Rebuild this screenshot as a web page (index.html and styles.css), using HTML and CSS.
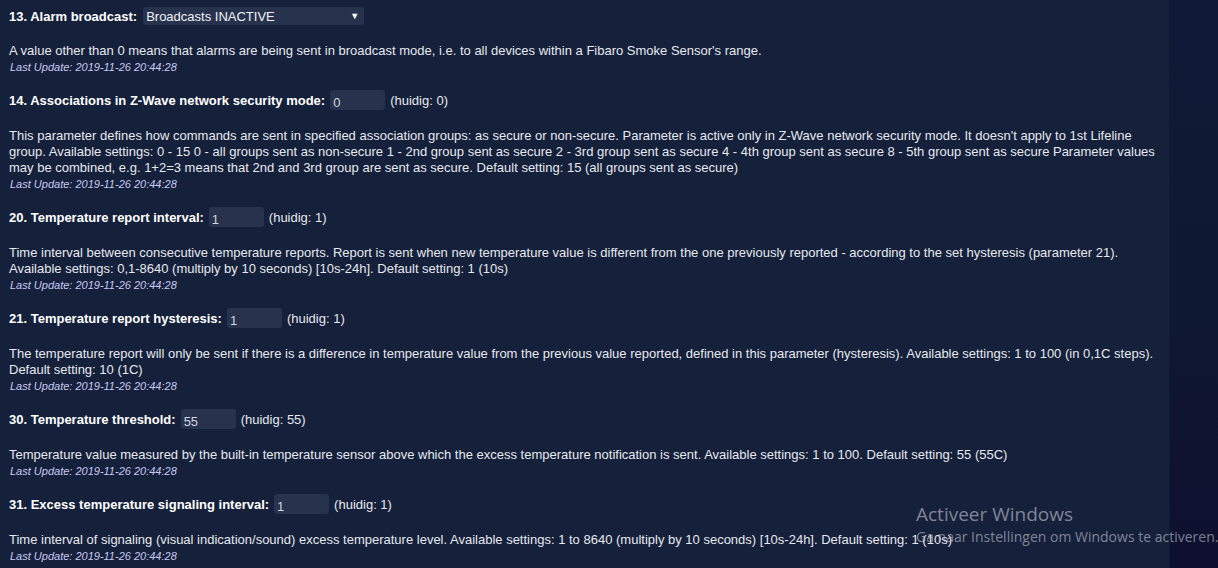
FILE: index.html
```html
<!DOCTYPE html>
<html lang="nl">
<head>
  <meta charset="UTF-8">
  <title>Parameters</title>
  <link rel="stylesheet" href="styles.css">
</head>
<body>
  <div class="panel">
    <div class="param">
      <div class="param-head">
        <span class="label">13. Alarm broadcast:</span>
        <div class="select">
          <span>Broadcasts INACTIVE</span>
          <span class="arrow">&#9660;</span>
        </div>
      </div>
      <p class="desc">A value other than 0 means that alarms are being sent in broadcast mode, i.e. to all devices within a Fibaro Smoke Sensor's range.</p>
      <div class="updated">Last Update: 2019-11-26 20:44:28</div>
    </div>

    <div class="param">
      <div class="param-head">
        <span class="label">14. Associations in Z-Wave network security mode:</span>
        <input class="field" type="text" value="0">
        <span class="current">(huidig: 0)</span>
      </div>
      <p class="desc">This parameter defines how commands are sent in specified association groups: as secure or non-secure. Parameter is active only in Z-Wave network security mode. It doesn't apply to 1st Lifeline group. Available settings: 0 - 15 0 - all groups sent as non-secure 1 - 2nd group sent as secure 2 - 3rd group sent as secure 4 - 4th group sent as secure 8 - 5th group sent as secure Parameter values may be combined, e.g. 1+2=3 means that 2nd and 3rd group are sent as secure. Default setting: 15 (all groups sent as secure)</p>
      <div class="updated">Last Update: 2019-11-26 20:44:28</div>
    </div>

    <div class="param">
      <div class="param-head">
        <span class="label">20. Temperature report interval:</span>
        <input class="field" type="text" value="1">
        <span class="current">(huidig: 1)</span>
      </div>
      <p class="desc">Time interval between consecutive temperature reports. Report is sent when new temperature value is different from the one previously reported - according to the set hysteresis (parameter 21). Available settings: 0,1-8640 (multiply by 10 seconds) [10s-24h]. Default setting: 1 (10s)</p>
      <div class="updated">Last Update: 2019-11-26 20:44:28</div>
    </div>

    <div class="param">
      <div class="param-head">
        <span class="label">21. Temperature report hysteresis:</span>
        <input class="field" type="text" value="1">
        <span class="current">(huidig: 1)</span>
      </div>
      <p class="desc">The temperature report will only be sent if there is a difference in temperature value from the previous value reported, defined in this parameter (hysteresis). Available settings: 1 to 100 (in 0,1C steps). Default setting: 10 (1C)</p>
      <div class="updated">Last Update: 2019-11-26 20:44:28</div>
    </div>

    <div class="param">
      <div class="param-head">
        <span class="label">30. Temperature threshold:</span>
        <input class="field" type="text" value="55">
        <span class="current">(huidig: 55)</span>
      </div>
      <p class="desc">Temperature value measured by the built-in temperature sensor above which the excess temperature notification is sent. Available settings: 1 to 100. Default setting: 55 (55C)</p>
      <div class="updated">Last Update: 2019-11-26 20:44:28</div>
    </div>

    <div class="param">
      <div class="param-head">
        <span class="label">31. Excess temperature signaling interval:</span>
        <input class="field" type="text" value="1">
        <span class="current">(huidig: 1)</span>
      </div>
      <p class="desc">Time interval of signaling (visual indication/sound) excess temperature level. Available settings: 1 to 8640 (multiply by 10 seconds) [10s-24h]. Default setting: 1 (10s)</p>
      <div class="updated">Last Update: 2019-11-26 20:44:28</div>
    </div>
  </div>
  <div class="sidebar"></div>

  <!-- Windows activation watermark -->
  <div class="watermark">
    <div class="wm-title">Activeer Windows</div>
    <div class="wm-sub">Ga naar Instellingen om Windows te activeren.</div>
  </div>
</body>
</html>
```

FILE: styles.css
```css
* {
  box-sizing: border-box;
}

body {
  margin: 0;
  height: 568px;
  overflow: hidden;
  display: flex;
  background-color: #15203b;
  font-family: 'Liberation Sans', Arial, sans-serif;
  color: #e6e8ee;
}

.panel {
  width: 1169px;
  flex-shrink: 0;
  padding: 7px 4px 0 9px;
  background-color: #15203b;
}

.sidebar {
  flex: 1;
  border-left: 1px solid #101a31;
  background: linear-gradient(to bottom, #0f1a36 0%, #0f1832 55%, #0e0f2e 100%);
}

.param {
  padding-bottom: 14px;
}

.param-head {
  display: flex;
  align-items: center;
  min-height: 18px;
}

.label {
  font-size: 13px;
  font-weight: bold;
  color: #ffffff;
  margin-right: 4px;
}

.select {
  display: flex;
  justify-content: space-between;
  align-items: center;
  width: 221px;
  height: 18px;
  margin-left: 2px;
  padding: 0 5px 0 3px;
  background-color: #27324d;
  border-radius: 3px;
  font-size: 13px;
  color: #f0f2f6;
}

.select .arrow {
  font-size: 9px;
  color: #ffffff;
}

.field {
  width: 55px;
  height: 20px;
  padding: 5px 3px 0 3px;
  margin: 0 5px 0 1px;
  border: none;
  border-radius: 3px;
  background-color: #27324d;
  color: #d2d6de;
  font-family: 'Liberation Sans', Arial, sans-serif;
  font-size: 13px;
}

.current {
  font-size: 13px;
  color: #e6e8ee;
}

.desc {
  margin: 18px 0 0 0;
  font-size: 13px;
  line-height: 16px;
  color: #e6e8ee;
}

.updated {
  padding-left: 1px;
  font-size: 11px;
  line-height: 17px;
  font-style: italic;
  color: #c9c9f2;
}

.watermark {
  position: absolute;
  left: 916px;
  top: 502px;
  white-space: nowrap;
  font-family: 'Open Sans', 'Noto Sans', sans-serif;
  color: rgba(200, 204, 214, 0.6);
}

.wm-title {
  font-size: 19px;
  line-height: 24px;
}

.wm-sub {
  font-size: 14px;
  line-height: 22px;
}
```
